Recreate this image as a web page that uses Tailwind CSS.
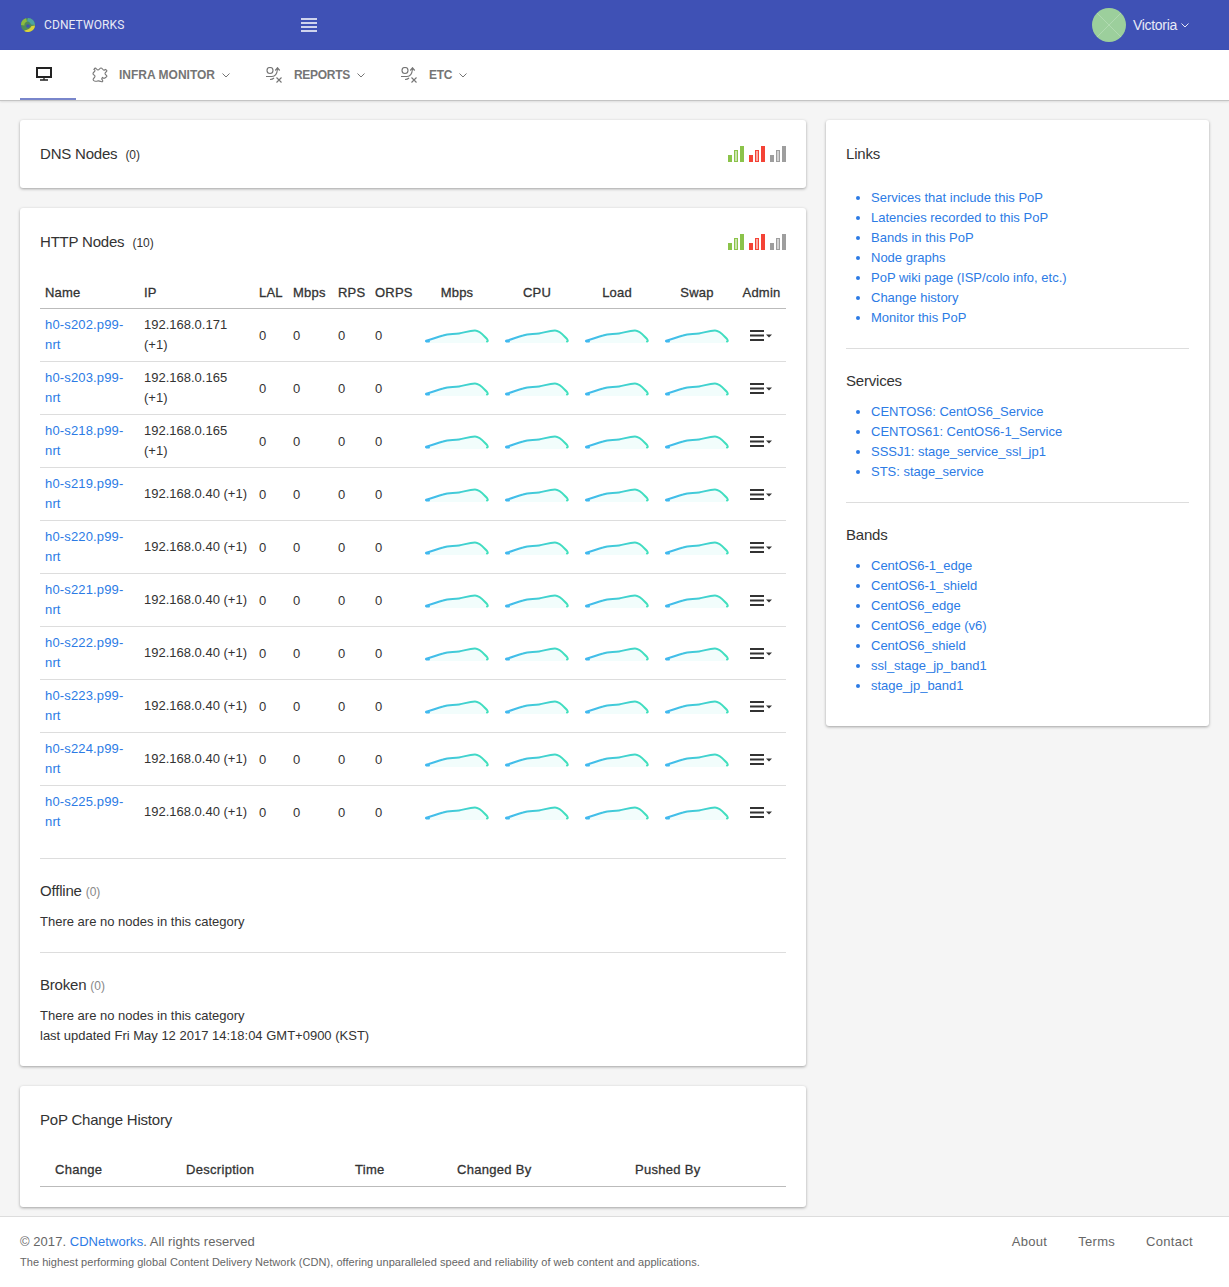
<!DOCTYPE html>
<html lang="en">
<head>
    <meta charset="UTF-8">
    <meta name="viewport" content="width=device-width, initial-scale=1.0">
    <title>PoP - CDNetworks</title>
    <script src="https://cdn.jsdelivr.net/npm/@tailwindcss/browser@4"></script>
</head>
<body class="bg-[#f5f5f5] font-['Liberation_Sans',Arial,sans-serif] text-[13px] leading-5 text-[#333]">
    <!-- shared icons -->
    <svg width="0" height="0" class="absolute">
        <defs>
            <linearGradient id="sparkLine" x1="0" x2="1" y1="0" y2="0">
                <stop offset="0" stop-color="#42b8f0"/>
                <stop offset="1" stop-color="#40e0bc"/>
            </linearGradient>
        </defs>
        <symbol id="spark" viewBox="0 0 64 20">
            <path d="M1 17V15.500C6 14.500 12 11 18 9.500C24 7.500 28 8.500 34 7.500C40 6.500 44 4.500 50 4.500C55 4.500 59 10 62 13.500L62.500 17Z" fill="#f2fdfc"/>
            <path d="M4 15.500H1.500C0.500 15 1 14.700 2 14.500C7 13.500 12 11 18 9.500C24 7.500 28 8.500 34 7.500C40 6.500 44 4.500 50 4.500C55 4.500 59 10 62 13C63 14.300 63 15.300 62 15.500" fill="none" stroke="url(#sparkLine)" stroke-width="2" stroke-linecap="round"/>
        </symbol>
        <symbol id="adminMenu" viewBox="0 0 22 12">
            <path d="M0 1H14M0 5.500H14M0 10H14" stroke="#333" stroke-width="2"/>
            <path d="M16 4.500H22L19 7.500Z" fill="#333"/>
        </symbol>
        <symbol id="routeIcon" viewBox="0 0 16 16" fill="none" stroke="#757575">
            <circle cx="4" cy="3.500" r="3" stroke-width="1.100"/>
            <path d="M0 9.500H6C9 9.500 11 7.500 11.500 2" stroke-width="1.100"/>
            <path d="M9.300 3.500L11.500 0.800L13.700 3.500" stroke-width="1.200"/>
            <path d="M4 12.500C5.500 12.500 7 12 8 11" stroke-width="1.100"/>
            <path d="M10.500 10.500L15.500 15.500M15.500 10.500L10.500 15.500" stroke-width="1.100"/>
        </symbol>
        <symbol id="chevron" viewBox="0 0 8 5" fill="none" stroke="currentColor">
            <path d="M0.500 0.500L4 4L7.500 0.500" stroke-width="1"/>
        </symbol>
        <symbol id="nodeBars" viewBox="0 0 16 16">
            <rect x="0" y="9" width="4" height="7" fill="currentColor"/>
            <rect x="6.500" y="4.500" width="3" height="11" fill="currentColor" fill-opacity="0.450" stroke="currentColor"/>
            <rect x="12" y="0" width="4" height="16" fill="currentColor"/>
        </symbol>
    </svg>

    <header class="h-[50px] bg-[#3f51b5] flex items-center text-white">
        <div class="w-[301px] pl-[21px] flex items-center shrink-0">
            <svg width="14" height="14" viewBox="0 0 14 14">
                <circle cx="7" cy="7" r="7" fill="#4f8a5a"/>
                <path d="M7 0A7 7 0 0 1 14 7L10 6.500C9 4 7.500 3.500 6 3.500Z" fill="#4fa3a0"/>
                <path d="M0 7A7 7 0 0 1 5 0.300L6 3.500C4 4.500 3 6 3.500 7.500Z" fill="#8dbb3f"/>
                <path d="M3 12.700C6 12 9 11 10.500 8L14 7.500A7 7 0 0 1 3 12.700Z" fill="#d9d23c"/>
                <circle cx="7" cy="8" r="1.800" fill="#3f51b5"/>
            </svg>
            <span class="ml-[9px] font-['Roboto',sans-serif] text-[12px] tracking-[0.1px] text-[#e8eaf6]">CDNETWORKS</span>
        </div>
        <svg width="16" height="14" viewBox="0 0 16 14" class="shrink-0">
            <path d="M0 1H16M0 5H16M0 9H16M0 13H16" stroke="#fff" stroke-width="1.500"/>
        </svg>
        <div class="ml-auto flex items-center pr-10">
            <div class="relative w-[34px] h-[34px] rounded-full overflow-hidden bg-[#9ccf9c]">
                <svg width="34" height="34" viewBox="0 0 34 34" class="absolute inset-0">
                    <path d="M5 5L29 29M29 5L5 29" stroke="#b9deb9" stroke-width="0.700"/>
                </svg>
            </div>
            <span class="ml-[7px] text-[14px] tracking-[-0.3px] text-[#e8eaf6]">Victoria</span>
            <svg width="8" height="5" class="ml-1 text-[#e8eaf6]"><use href="#chevron"/></svg>
        </div>
    </header>

    <nav class="h-[51px] bg-white flex items-stretch pl-5 border-b border-[#c4c4c4] shadow-[0_1px_2px_rgba(0,0,0,0.1)] text-[12px] font-bold text-[#757575]">
        <a href="#" class="w-14 h-[50px] pr-2 border-b-2 border-[#7986cb] flex items-center justify-center">
            <svg width="16" height="14" viewBox="0 0 16 14">
                <rect x="1" y="1" width="14" height="9" fill="none" stroke="#222" stroke-width="2"/>
                <path d="M4 13H12M8 11V13" stroke="#222" stroke-width="1.300"/>
            </svg>
        </a>
        <a href="#" class="flex items-center pl-4">
            <svg width="16" height="16" viewBox="0 0 16 16" fill="none" stroke="#777" stroke-width="1.100">
                <path d="M2 2.500Q3 0 4.500 2T7.500 2T10.500 2T13.500 2.500Q16 3.500 14 5T14 8T13.500 10.500Q12 12 10.500 10.500Q9 12 10.500 13Q11.500 15.500 9 14.500T5.500 14T2.500 14Q0 13 2 11T2 8T2 5T2 2.500Z"/>
            </svg>
            <span class="ml-[11px]">INFRA MONITOR</span>
            <svg width="8" height="5" class="ml-[7px]"><use href="#chevron"/></svg>
        </a>
        <a href="#" class="flex items-center ml-[36px]">
            <svg width="16" height="16"><use href="#routeIcon"/></svg>
            <span class="ml-3 tracking-[-0.3px]">REPORTS</span>
            <svg width="8" height="5" class="ml-[7px]"><use href="#chevron"/></svg>
        </a>
        <a href="#" class="flex items-center ml-[36px]">
            <svg width="16" height="16"><use href="#routeIcon"/></svg>
            <span class="ml-3 tracking-[-0.3px]">ETC</span>
            <svg width="8" height="5" class="ml-[7px]"><use href="#chevron"/></svg>
        </a>
    </nav>

    <main class="flex gap-5 px-5 pt-[19px] items-start">
        <div class="w-[786px] flex flex-col gap-5">
            <section class="h-[68px] bg-white rounded-[3px] shadow-[0_1px_3px_rgba(0,0,0,0.35)] px-5 flex items-center justify-between">
                <h2 class="text-[15px] tracking-[-0.2px]">DNS Nodes <small class="ml-1 text-[12px] tracking-normal">(0)</small></h2>
                <div class="flex gap-[5px]">
                    <svg width="16" height="16" class="text-[#8bc34a]"><use href="#nodeBars"/></svg>
                    <svg width="16" height="16" class="text-[#f44336]"><use href="#nodeBars"/></svg>
                    <svg width="16" height="16" class="text-[#9e9e9e]"><use href="#nodeBars"/></svg>
                </div>
            </section>

            <section class="h-[858px] bg-white rounded-[3px] shadow-[0_1px_3px_rgba(0,0,0,0.35)] px-5 pt-6">
                <div class="flex items-center justify-between h-5">
                    <h2 class="text-[15px] tracking-[-0.2px]">HTTP Nodes <small class="ml-1 text-[12px] tracking-normal">(10)</small></h2>
                    <div class="flex gap-[5px]">
                        <svg width="16" height="16" class="text-[#8bc34a]"><use href="#nodeBars"/></svg>
                        <svg width="16" height="16" class="text-[#f44336]"><use href="#nodeBars"/></svg>
                        <svg width="16" height="16" class="text-[#9e9e9e]"><use href="#nodeBars"/></svg>
                    </div>
                </div>
                <table class="w-[746px] table-fixed mt-[24px] border-collapse">
                    <colgroup>
                        <col class="w-[99px]"><col class="w-[115px]"><col class="w-[34px]"><col class="w-[45px]"><col class="w-[37px]"><col class="w-[47px]">
                        <col class="w-[80px]"><col class="w-[80px]"><col class="w-[80px]"><col class="w-[80px]"><col class="w-[49px]">
                    </colgroup>
                    <thead>
                        <tr class="h-[32px] border-b border-[#bbb] text-left tracking-[0.2px]">
                            <th class="px-[5px] pt-[2px] font-normal [-webkit-text-stroke:0.3px]">Name</th>
                            <th class="px-[5px] pt-[2px] font-normal [-webkit-text-stroke:0.3px]">IP</th>
                            <th class="px-[5px] pt-[2px] font-normal [-webkit-text-stroke:0.3px]">LAL</th>
                            <th class="px-[5px] pt-[2px] font-normal [-webkit-text-stroke:0.3px]">Mbps</th>
                            <th class="px-[5px] pt-[2px] font-normal [-webkit-text-stroke:0.3px]">RPS</th>
                            <th class="px-[5px] pt-[2px] font-normal [-webkit-text-stroke:0.3px]">ORPS</th>
                            <th class="px-[5px] pt-[2px] font-normal [-webkit-text-stroke:0.3px] text-center">Mbps</th>
                            <th class="px-[5px] pt-[2px] font-normal [-webkit-text-stroke:0.3px] text-center">CPU</th>
                            <th class="px-[5px] pt-[2px] font-normal [-webkit-text-stroke:0.3px] text-center">Load</th>
                            <th class="px-[5px] pt-[2px] font-normal [-webkit-text-stroke:0.3px] text-center">Swap</th>
                            <th class="px-[5px] pt-[2px] font-normal [-webkit-text-stroke:0.3px] text-center">Admin</th>
                        </tr>
                    </thead>
                    <tbody>
                        <tr class="h-[53px] border-b border-[#ddd]">
                            <td class="px-[5px]"><a href="#" class="text-[#2c7be5] tracking-[0.15px]">h0-s202.p99-nrt</a></td><td class="px-[5px]">192.168.0.171 (+1)</td>
                            <td class="px-[5px] pt-[2px]">0</td><td class="px-[5px] pt-[2px]">0</td><td class="px-[5px] pt-[2px]">0</td><td class="px-[5px] pt-[2px]">0</td>
                            <td class="pt-[2px]"><svg width="64" height="20" class="mx-auto"><use href="#spark"/></svg></td><td class="pt-[2px]"><svg width="64" height="20" class="mx-auto"><use href="#spark"/></svg></td><td class="pt-[2px]"><svg width="64" height="20" class="mx-auto"><use href="#spark"/></svg></td><td class="pt-[2px]"><svg width="64" height="20" class="mx-auto"><use href="#spark"/></svg></td>
                            <td class="pt-[2px]"><svg width="22" height="12" class="ml-[13px]"><use href="#adminMenu"/></svg></td>
                        </tr>
                        <tr class="h-[53px] border-b border-[#ddd]">
                            <td class="px-[5px]"><a href="#" class="text-[#2c7be5] tracking-[0.15px]">h0-s203.p99-nrt</a></td><td class="px-[5px]">192.168.0.165 (+1)</td>
                            <td class="px-[5px] pt-[2px]">0</td><td class="px-[5px] pt-[2px]">0</td><td class="px-[5px] pt-[2px]">0</td><td class="px-[5px] pt-[2px]">0</td>
                            <td class="pt-[2px]"><svg width="64" height="20" class="mx-auto"><use href="#spark"/></svg></td><td class="pt-[2px]"><svg width="64" height="20" class="mx-auto"><use href="#spark"/></svg></td><td class="pt-[2px]"><svg width="64" height="20" class="mx-auto"><use href="#spark"/></svg></td><td class="pt-[2px]"><svg width="64" height="20" class="mx-auto"><use href="#spark"/></svg></td>
                            <td class="pt-[2px]"><svg width="22" height="12" class="ml-[13px]"><use href="#adminMenu"/></svg></td>
                        </tr>
                        <tr class="h-[53px] border-b border-[#ddd]">
                            <td class="px-[5px]"><a href="#" class="text-[#2c7be5] tracking-[0.15px]">h0-s218.p99-nrt</a></td><td class="px-[5px]">192.168.0.165 (+1)</td>
                            <td class="px-[5px] pt-[2px]">0</td><td class="px-[5px] pt-[2px]">0</td><td class="px-[5px] pt-[2px]">0</td><td class="px-[5px] pt-[2px]">0</td>
                            <td class="pt-[2px]"><svg width="64" height="20" class="mx-auto"><use href="#spark"/></svg></td><td class="pt-[2px]"><svg width="64" height="20" class="mx-auto"><use href="#spark"/></svg></td><td class="pt-[2px]"><svg width="64" height="20" class="mx-auto"><use href="#spark"/></svg></td><td class="pt-[2px]"><svg width="64" height="20" class="mx-auto"><use href="#spark"/></svg></td>
                            <td class="pt-[2px]"><svg width="22" height="12" class="ml-[13px]"><use href="#adminMenu"/></svg></td>
                        </tr>
                        <tr class="h-[53px] border-b border-[#ddd]">
                            <td class="px-[5px]"><a href="#" class="text-[#2c7be5] tracking-[0.15px]">h0-s219.p99-nrt</a></td><td class="px-[5px]">192.168.0.40 (+1)</td>
                            <td class="px-[5px] pt-[2px]">0</td><td class="px-[5px] pt-[2px]">0</td><td class="px-[5px] pt-[2px]">0</td><td class="px-[5px] pt-[2px]">0</td>
                            <td class="pt-[2px]"><svg width="64" height="20" class="mx-auto"><use href="#spark"/></svg></td><td class="pt-[2px]"><svg width="64" height="20" class="mx-auto"><use href="#spark"/></svg></td><td class="pt-[2px]"><svg width="64" height="20" class="mx-auto"><use href="#spark"/></svg></td><td class="pt-[2px]"><svg width="64" height="20" class="mx-auto"><use href="#spark"/></svg></td>
                            <td class="pt-[2px]"><svg width="22" height="12" class="ml-[13px]"><use href="#adminMenu"/></svg></td>
                        </tr>
                        <tr class="h-[53px] border-b border-[#ddd]">
                            <td class="px-[5px]"><a href="#" class="text-[#2c7be5] tracking-[0.15px]">h0-s220.p99-nrt</a></td><td class="px-[5px]">192.168.0.40 (+1)</td>
                            <td class="px-[5px] pt-[2px]">0</td><td class="px-[5px] pt-[2px]">0</td><td class="px-[5px] pt-[2px]">0</td><td class="px-[5px] pt-[2px]">0</td>
                            <td class="pt-[2px]"><svg width="64" height="20" class="mx-auto"><use href="#spark"/></svg></td><td class="pt-[2px]"><svg width="64" height="20" class="mx-auto"><use href="#spark"/></svg></td><td class="pt-[2px]"><svg width="64" height="20" class="mx-auto"><use href="#spark"/></svg></td><td class="pt-[2px]"><svg width="64" height="20" class="mx-auto"><use href="#spark"/></svg></td>
                            <td class="pt-[2px]"><svg width="22" height="12" class="ml-[13px]"><use href="#adminMenu"/></svg></td>
                        </tr>
                        <tr class="h-[53px] border-b border-[#ddd]">
                            <td class="px-[5px]"><a href="#" class="text-[#2c7be5] tracking-[0.15px]">h0-s221.p99-nrt</a></td><td class="px-[5px]">192.168.0.40 (+1)</td>
                            <td class="px-[5px] pt-[2px]">0</td><td class="px-[5px] pt-[2px]">0</td><td class="px-[5px] pt-[2px]">0</td><td class="px-[5px] pt-[2px]">0</td>
                            <td class="pt-[2px]"><svg width="64" height="20" class="mx-auto"><use href="#spark"/></svg></td><td class="pt-[2px]"><svg width="64" height="20" class="mx-auto"><use href="#spark"/></svg></td><td class="pt-[2px]"><svg width="64" height="20" class="mx-auto"><use href="#spark"/></svg></td><td class="pt-[2px]"><svg width="64" height="20" class="mx-auto"><use href="#spark"/></svg></td>
                            <td class="pt-[2px]"><svg width="22" height="12" class="ml-[13px]"><use href="#adminMenu"/></svg></td>
                        </tr>
                        <tr class="h-[53px] border-b border-[#ddd]">
                            <td class="px-[5px]"><a href="#" class="text-[#2c7be5] tracking-[0.15px]">h0-s222.p99-nrt</a></td><td class="px-[5px]">192.168.0.40 (+1)</td>
                            <td class="px-[5px] pt-[2px]">0</td><td class="px-[5px] pt-[2px]">0</td><td class="px-[5px] pt-[2px]">0</td><td class="px-[5px] pt-[2px]">0</td>
                            <td class="pt-[2px]"><svg width="64" height="20" class="mx-auto"><use href="#spark"/></svg></td><td class="pt-[2px]"><svg width="64" height="20" class="mx-auto"><use href="#spark"/></svg></td><td class="pt-[2px]"><svg width="64" height="20" class="mx-auto"><use href="#spark"/></svg></td><td class="pt-[2px]"><svg width="64" height="20" class="mx-auto"><use href="#spark"/></svg></td>
                            <td class="pt-[2px]"><svg width="22" height="12" class="ml-[13px]"><use href="#adminMenu"/></svg></td>
                        </tr>
                        <tr class="h-[53px] border-b border-[#ddd]">
                            <td class="px-[5px]"><a href="#" class="text-[#2c7be5] tracking-[0.15px]">h0-s223.p99-nrt</a></td><td class="px-[5px]">192.168.0.40 (+1)</td>
                            <td class="px-[5px] pt-[2px]">0</td><td class="px-[5px] pt-[2px]">0</td><td class="px-[5px] pt-[2px]">0</td><td class="px-[5px] pt-[2px]">0</td>
                            <td class="pt-[2px]"><svg width="64" height="20" class="mx-auto"><use href="#spark"/></svg></td><td class="pt-[2px]"><svg width="64" height="20" class="mx-auto"><use href="#spark"/></svg></td><td class="pt-[2px]"><svg width="64" height="20" class="mx-auto"><use href="#spark"/></svg></td><td class="pt-[2px]"><svg width="64" height="20" class="mx-auto"><use href="#spark"/></svg></td>
                            <td class="pt-[2px]"><svg width="22" height="12" class="ml-[13px]"><use href="#adminMenu"/></svg></td>
                        </tr>
                        <tr class="h-[53px] border-b border-[#ddd]">
                            <td class="px-[5px]"><a href="#" class="text-[#2c7be5] tracking-[0.15px]">h0-s224.p99-nrt</a></td><td class="px-[5px]">192.168.0.40 (+1)</td>
                            <td class="px-[5px] pt-[2px]">0</td><td class="px-[5px] pt-[2px]">0</td><td class="px-[5px] pt-[2px]">0</td><td class="px-[5px] pt-[2px]">0</td>
                            <td class="pt-[2px]"><svg width="64" height="20" class="mx-auto"><use href="#spark"/></svg></td><td class="pt-[2px]"><svg width="64" height="20" class="mx-auto"><use href="#spark"/></svg></td><td class="pt-[2px]"><svg width="64" height="20" class="mx-auto"><use href="#spark"/></svg></td><td class="pt-[2px]"><svg width="64" height="20" class="mx-auto"><use href="#spark"/></svg></td>
                            <td class="pt-[2px]"><svg width="22" height="12" class="ml-[13px]"><use href="#adminMenu"/></svg></td>
                        </tr>
                        <tr class="h-[53px]">
                            <td class="px-[5px]"><a href="#" class="text-[#2c7be5] tracking-[0.15px]">h0-s225.p99-nrt</a></td><td class="px-[5px]">192.168.0.40 (+1)</td>
                            <td class="px-[5px] pt-[2px]">0</td><td class="px-[5px] pt-[2px]">0</td><td class="px-[5px] pt-[2px]">0</td><td class="px-[5px] pt-[2px]">0</td>
                            <td class="pt-[2px]"><svg width="64" height="20" class="mx-auto"><use href="#spark"/></svg></td><td class="pt-[2px]"><svg width="64" height="20" class="mx-auto"><use href="#spark"/></svg></td><td class="pt-[2px]"><svg width="64" height="20" class="mx-auto"><use href="#spark"/></svg></td><td class="pt-[2px]"><svg width="64" height="20" class="mx-auto"><use href="#spark"/></svg></td>
                            <td class="pt-[2px]"><svg width="22" height="12" class="ml-[13px]"><use href="#adminMenu"/></svg></td>
                        </tr>
                    </tbody>
                </table>
                <hr class="mt-5 border-[#ddd]">
                <h3 class="mt-[22px] text-[15px] tracking-[-0.2px]">Offline <small class="text-[12px] tracking-normal text-[#888]">(0)</small></h3>
                <p class="mt-[10px]">There are no nodes in this category</p>
                <hr class="mt-[20px] border-[#ddd]">
                <h3 class="mt-[22px] text-[15px] tracking-[-0.2px]">Broken <small class="text-[12px] tracking-normal text-[#888]">(0)</small></h3>
                <p class="mt-[10px]">There are no nodes in this category</p>
                <p>last updated Fri May 12 2017 14:18:04 GMT+0900 (KST)</p>
            </section>

            <section class="h-[121px] bg-white rounded-[3px] shadow-[0_1px_3px_rgba(0,0,0,0.35)] px-5 pt-6">
                <h2 class="text-[15px] tracking-[-0.2px]">PoP Change History</h2>
                <table class="w-[746px] table-fixed mt-[23px]">
                    <colgroup>
                        <col class="w-[131px]"><col class="w-[169px]"><col class="w-[102px]"><col class="w-[178px]"><col class="w-[166px]">
                    </colgroup>
                    <thead>
                        <tr class="h-[33px] border-b border-[#bbb] text-left tracking-[0.3px]">
                            <th class="pl-[15px] pt-[2px] font-normal [-webkit-text-stroke:0.3px]">Change</th>
                            <th class="pl-[15px] pt-[2px] font-normal [-webkit-text-stroke:0.3px]">Description</th>
                            <th class="pl-[15px] pt-[2px] font-normal [-webkit-text-stroke:0.3px]">Time</th>
                            <th class="pl-[15px] pt-[2px] font-normal [-webkit-text-stroke:0.3px]">Changed By</th>
                            <th class="pl-[15px] pt-[2px] font-normal [-webkit-text-stroke:0.3px]">Pushed By</th>
                        </tr>
                    </thead>
                </table>
            </section>
        </div>

        <aside class="w-[383px] h-[606px] bg-white rounded-[3px] shadow-[0_1px_3px_rgba(0,0,0,0.35)] px-5 pt-6">
            <h2 class="text-[15px] tracking-[-0.2px]">Links</h2>
            <ul class="list-disc pl-[25px] mt-6 text-[#2c7be5]">
                <li><a href="#">Services that include this PoP</a></li>
                <li><a href="#">Latencies recorded to this PoP</a></li>
                <li><a href="#">Bands in this PoP</a></li>
                <li><a href="#">Node graphs</a></li>
                <li><a href="#">PoP wiki page (ISP/colo info, etc.)</a></li>
                <li><a href="#">Change history</a></li>
                <li><a href="#">Monitor this PoP</a></li>
            </ul>
            <hr class="mt-[20px] border-[#ddd]">
            <h2 class="mt-[22px] text-[15px] tracking-[-0.2px]">Services</h2>
            <ul class="list-disc pl-[25px] mt-[11px] text-[#2c7be5]">
                <li><a href="#">CENTOS6: CentOS6_Service</a></li>
                <li><a href="#">CENTOS61: CentOS6-1_Service</a></li>
                <li><a href="#">SSSJ1: stage_service_ssl_jp1</a></li>
                <li><a href="#">STS: stage_service</a></li>
            </ul>
            <hr class="mt-[20px] border-[#ddd]">
            <h2 class="mt-[22px] text-[15px] tracking-[-0.2px]">Bands</h2>
            <ul class="list-disc pl-[25px] mt-[11px] text-[#2c7be5]">
                <li><a href="#">CentOS6-1_edge</a></li>
                <li><a href="#">CentOS6-1_shield</a></li>
                <li><a href="#">CentOS6_edge</a></li>
                <li><a href="#">CentOS6_edge (v6)</a></li>
                <li><a href="#">CentOS6_shield</a></li>
                <li><a href="#">ssl_stage_jp_band1</a></li>
                <li><a href="#">stage_jp_band1</a></li>
            </ul>
        </aside>
    </main>

    <footer class="mt-[9px] h-[71px] bg-white border-t border-[#ddd] px-5 pt-[15px] flex justify-between text-[#666]">
        <div>
            <p class="text-[13px] tracking-[0.05px]">&copy; 2017. <a href="#" class="text-[#2c7be5]">CDNetworks</a>. All rights reserved</p>
            <p class="text-[11px] tracking-[0.045px]">The highest performing global Content Delivery Network (CDN), offering unparalleled speed and reliability of web content and applications.</p>
        </div>
        <div class="flex gap-[31px] pr-4 tracking-[0.3px]">
            <a href="#">About</a>
            <a href="#">Terms</a>
            <a href="#">Contact</a>
        </div>
    </footer>
</body>
</html>
